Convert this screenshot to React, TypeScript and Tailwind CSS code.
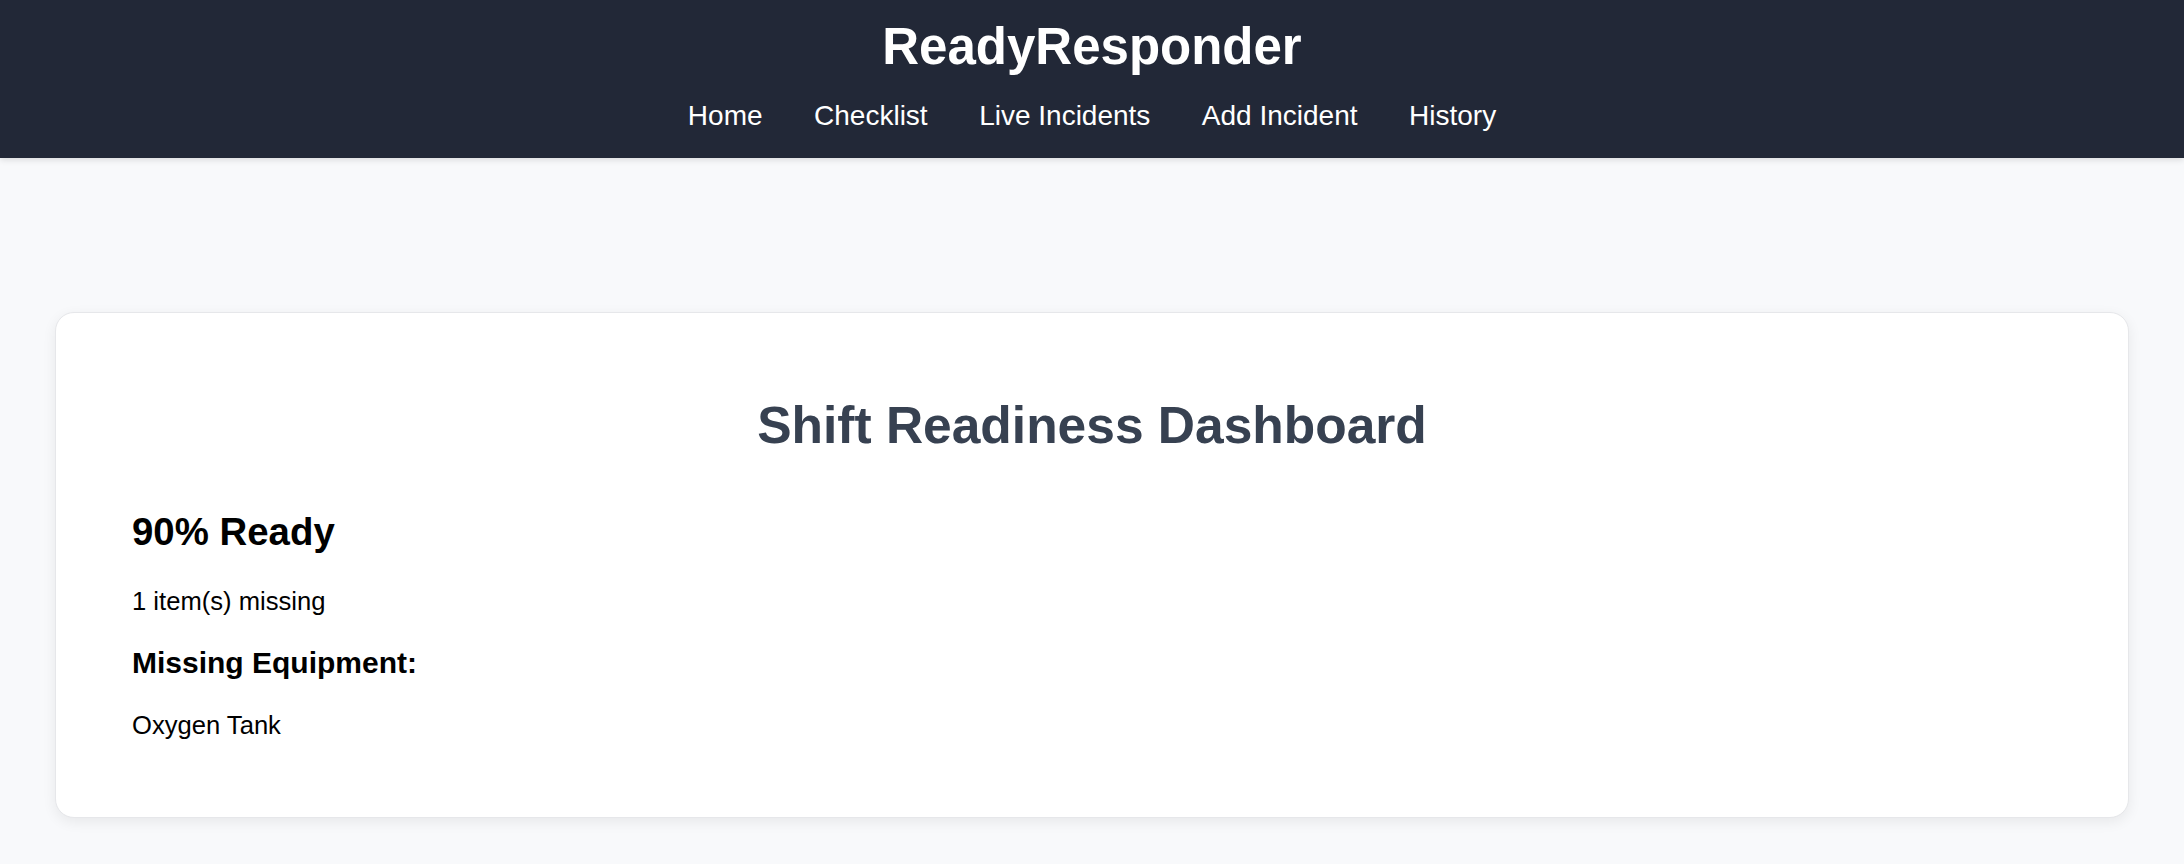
import React from "react";

export default function App() {
  const links = ["Home", "Checklist", "Live Incidents", "Add Incident", "History"];
  return (
    <div
      className="min-h-[864px] bg-[#f8f9fb]"
      style={{ fontFamily: '"Liberation Sans", Arial, Helvetica, sans-serif' }}
    >
      <header className="flex h-[158px] flex-col items-center bg-[#222837] pt-[21px] shadow-[0_2px_6px_rgba(0,0,0,0.12)]">
        <h1 className="text-[51px] font-bold leading-none text-white">ReadyResponder</h1>
        <nav className="mt-[30px] flex gap-[51.5px]">
          {links.map((l) => (
            <a key={l} className="text-[28px] leading-none text-white">
              {l}
            </a>
          ))}
        </nav>
      </header>
      <main className="px-[55px] pt-[154px]">
        <section className="rounded-[19px] border border-[#e6e7ea] bg-white px-[76px] pb-[78px] pt-[87px] shadow-[0_4px_14px_rgba(0,0,0,0.07)]">
          <h2 className="text-center text-[51.5px] font-bold leading-none text-[#374151]">
            Shift Readiness Dashboard
          </h2>
          <h3 className="mt-[61px] text-[38.4px] font-bold leading-none text-black">90% Ready</h3>
          <p className="mt-[37.6px] text-[25.6px] leading-none text-black">1 item(s) missing</p>
          <h4 className="mt-[34.4px] text-[30px] font-bold leading-none text-black">Missing Equipment:</h4>
          <ul className="mt-[34.5px]">
            <li className="text-[25.6px] leading-none text-black">Oxygen Tank</li>
          </ul>
        </section>
      </main>
    </div>
  );
}
